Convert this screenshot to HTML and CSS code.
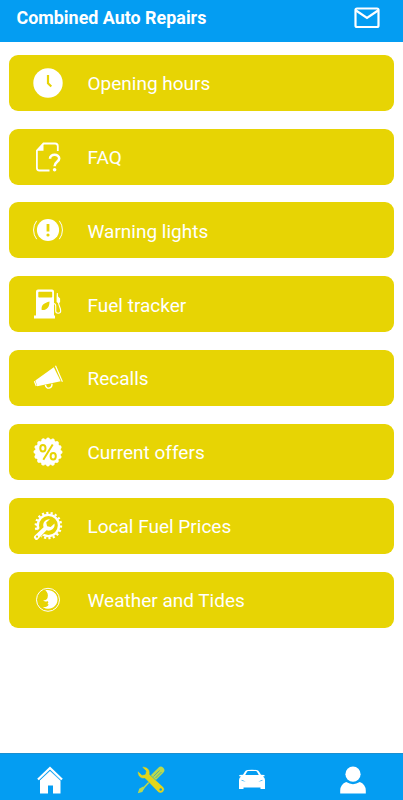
FILE: index.html
```
<!DOCTYPE html>
<html lang="en">
<head>
    <meta charset="UTF-8">
    <meta name="viewport" content="width=device-width, initial-scale=1.0">
    <title>Combined Auto Repairs</title>
    <link rel="stylesheet" href="styles.css">
</head>
<body>
    <header class="header">
        <h1>Combined Auto Repairs</h1>
        <svg class="mail" viewBox="0 0 26 22">
            <rect x="1.5" y="1.5" width="23" height="18.5" rx="1.5"/>
            <path d="M2 3.5l11 7.5 11-7.5"/>
        </svg>
    </header>

    <!-- Menu -->
    <main class="menu">
        <a class="item">
            <svg class="icon" viewBox="0 0 30 30">
                <circle class="fill" cx="15" cy="15" r="14.7"/>
                <path class="cut" d="M15 7v8.3l3.3 3.2" stroke-width="2.2"/>
            </svg>
            <span>Opening hours</span>
        </a>
        <a class="item">
            <svg class="icon" viewBox="0 0 30 30">
                <path class="line" d="M24.8 9V4.2q0-2.7-2.7-2.7H10.5L3.9 8.5V26q0 2.5 2.5 2.5H16.500" stroke-width="1.8"/>
                <path class="fill" d="M10.5 1v7.800H3.500z"/>
                <path class="line" d="M17 16.800c0-5.300 9.200-5.300 9.200-.3 0 3.400-4.600 3.300-4.600 7.700" stroke-width="2.6"/>
                <circle class="fill" cx="21.6" cy="27.8" r="1.8"/>
            </svg>
            <span>FAQ</span>
        </a>
        <a class="item">
            <svg class="icon" viewBox="0 0 30 30">
                <circle class="fill" cx="15" cy="15" r="11.1"/>
                <path class="line" d="M3.700 5.800a15 15 0 0 0 0 18.400M26.300 5.800a15 15 0 0 1 0 18.400" stroke-width="1"/>
                <path class="cut" d="M15 9v7.500" stroke-width="2.8"/>
                <circle class="dot" cx="15" cy="20" r="1.6"/>
            </svg>
            <span>Warning lights</span>
        </a>
        <a class="item">
            <svg class="icon" viewBox="0 0 30 30">
                <path class="fill" fill-rule="evenodd" d="M3 26.500V2.500q0-2 2-2h14q2 0 2 2v24h1v3H1v-3zM5.300 3.600v4.200q0 .8.800.8h12.300q.8 0 .8-.8V3.600q0-.8-.8-.8H6.100q-.8 0-.8.8zM16.500 12.500c-5 1.500-8.500 3-7.800 8.500 5 .5 7.800-2.500 7.800-8.500z"/>
                <path class="line" d="M20.500 14.500q2.200 0 2.200 2.500v5c0 3 5 3 5 0 0-3.500-2.200-5-2.200-9" stroke-width="1.1"/>
                <path class="fill" d="M23.800 4l1 0 .3 3.500 2 2v3.500l-1.500 1.500-2-1.500V8z"/>
            </svg>
            <span>Fuel tracker</span>
        </a>
        <a class="item">
            <svg class="icon" viewBox="0 0 30 30">
                <path class="fill" d="M2.300 17.500L20.800 4.200l6.900 14-23.400 5z"/>
                <path class="line" d="M22.500 2.800l6.900 15.900M1.400 18.300l1.900 4.600" stroke-width="1.2"/>
                <path class="line" d="M12.400 21.800c.6 4.900 6.800 4.300 6.600-1" stroke-width="1.4"/>
            </svg>
            <span>Recalls</span>
        </a>
        <a class="item">
            <svg class="icon" viewBox="0 0 30 30">
                <circle class="fill" cx="15" cy="15" r="13"/>
                <circle class="scallop" cx="15" cy="15" r="12.7" pathLength="64"/>
                <path class="cut" d="M19.700 7.500L10.300 22.700" stroke-width="2"/>
                <ellipse class="cut" cx="9.9" cy="11.2" rx="2.6" ry="3.2" stroke-width="2"/>
                <ellipse class="cut" cx="20.2" cy="19.2" rx="2.6" ry="3.2" stroke-width="2"/>
            </svg>
            <span>Current offers</span>
        </a>
        <a class="item">
            <svg class="icon" viewBox="0 0 30 30">
                <circle class="line" cx="15.4" cy="14.5" r="10.6" stroke-width="2.4"/>
                <circle class="line teeth" cx="15.4" cy="14.5" r="12.6" pathLength="72" stroke-width="2.4"/>
                <path class="gap" d="M11.900 17L2.900 26"/>
                <path class="fill" d="M16.900 8.200a6 6 0 0 0-6.300 8.100L1.300 25q-1 1.200.1 2.500l.8.900q1.200 1 2.500 0l8.800-9.200a6 6 0 0 0 8-6.700l-3.800 3.600-3.600-.8-.9-3.700z"/>
                <circle class="dot" cx="4" cy="25.7" r="1.1"/>
            </svg>
            <span>Local Fuel Prices</span>
        </a>
        <a class="item">
            <svg class="icon" viewBox="0 0 30 30">
                <circle class="line" cx="15" cy="14.8" r="11.5" stroke-width="1"/>
                <path class="fill" d="M12.300 5.300c6.200-1.200 12.200 3.200 12.200 9.300 0 7.300-8 12-14.700 7.300 2.200.5 5-.2 5.900-2.500l-1.500-.3c1.200-.6 1.400-1.700.6-3-1.200.9-3.400.6-4.700-.8 2.300.1 3.700-.6 4.400-2.400 1.100-3-.1-6-2.200-7.600z"/>
            </svg>
            <span>Weather and Tides</span>
        </a>
    </main>

    <!-- Bottom navigation -->
    <nav class="nav">
        <a>
            <svg viewBox="0 0 28 28">
                <path class="fill" d="M14 4.500L24.500 14v13.500H17v-8h-5v8H4V14z"/>
                <path class="line" d="M2 13.500L14 2l12 11.500" stroke-width="2.3"/>
                <path class="roof" d="M3.500 14.500L14 4.500l10.500 10"/>
            </svg>
        </a>
        <a class="active">
            <svg viewBox="0 0 28 28">
                <path class="driver" d="M3.500 25.500l4-4.500L23 4.500"/>
                <path class="handle" d="M17 11l6.800-6.800"/>
                <path class="groove" d="M16.500 10.500l6-6M18.500 12l6-6"/>
                <path class="tip" d="M.8 27.300l1.400-4.500 4-2.200 1.300 1.300-2.200 4z"/>
                <path class="wrench" d="M5 1.200L9 5 8.200 8.200 5 9 1 5C-.2 9.500 3.500 13.300 8 12.500l13 13.500c3 3.200 8.500-1.500 5.300-5L12.700 8.500C13.800 4 9.500-.5 5 1.200z"/>
                <circle class="hole" cx="23.7" cy="23.5" r="1.2"/>
            </svg>
        </a>
        <a>
            <svg viewBox="0 0 28 28">
                <path class="fill" fill-rule="evenodd" d="M5 8.800L7 5.500Q7.600 4 9.500 4q4.500-.6 9 0 1.900 0 2.500 1.500l2 3.300 3.500.2v1.300l-1.500.3q2 1.300 2 3.400V23h-4.500v-1.500h-17V23H1v-9q0-2.100 2-3.400L1.300 10.300V9zM7.200 9h13.600l-1.700-3q-.4-.8-1.400-.9-3.700-.4-7.400 0-1 .1-1.400.9zM3.200 13.700q.5 1.700 4.500 1.700zm21.600 0l-4.500 1.700q4 0 4.500-1.700z"/>
            </svg>
        </a>
        <a>
            <svg viewBox="0 0 28 28">
                <circle class="fill" cx="14" cy="8.2" r="7.6"/>
                <path class="fill" d="M1.200 27.500v-3q.3-6.500 6-8.500 6.800 4.300 13.600 0 5.700 2 6 8.500v3z"/>
            </svg>
        </a>
    </nav>
</body>
</html>
```

FILE: styles.css
```
* {
    box-sizing: border-box;
}
body {
    display: flex;
    flex-direction: column;
    height: 800px;
    margin: 0;
    background: #fff;
    color: #fff;
    font-family: Roboto, sans-serif;
}
svg {
    display: block;
    overflow: visible;
}
.header {
    display: flex;
    justify-content: space-between;
    height: 42px;
    padding: 6px 23px 0 16.5px;
    background: #049df2;
}
.header h1 {
    margin: 0;
    font-size: 17.9px;
    line-height: 23px;
    font-weight: bold;
    white-space: nowrap;
}
.mail {
    width: 26px;
    height: 22px;
    margin-top: 1px;
    fill: none;
    stroke: #fff;
    stroke-width: 2.2;
}
.menu {
    display: flex;
    flex: 1;
    flex-direction: column;
    gap: 17.85px;
    padding: 12.8px 9px 0;
}
.item {
    display: flex;
    align-items: center;
    gap: 24.5px;
    height: 56px;
    padding: 0 24px;
    border-radius: 9px;
    background: #e7d404;
    font-size: 19px;
    line-height: 24px;
}
.item span {
    padding-top: 2.4px;
}
.icon {
    width: 30px;
    height: 30px;
}
.fill {
    fill: #fff;
}
.line {
    fill: none;
    stroke: #fff;
}
.cut {
    fill: none;
    stroke: #e7d404;
}
.dot {
    fill: #e7d404;
}
.scallop {
    fill: none;
    stroke: #fff;
    stroke-width: 3.6;
    stroke-linecap: round;
    stroke-dasharray: 0.1 3.9;
}
.teeth {
    stroke-dasharray: 2 2;
}
.gap {
    stroke: #e7d404;
    stroke-width: 7;
}
.nav {
    display: grid;
    grid-template-columns: repeat(4, 1fr);
    justify-items: center;
    height: 47px;
    padding-top: 12px;
    border-top: 1px solid #1a8fd0;
    background: #049df2;
}
.nav svg {
    width: 28px;
    height: 28px;
}
.roof {
    fill: none;
    stroke: #049df2;
    stroke-width: 0.7;
}
.driver {
    stroke: #b9d94e;
    stroke-width: 1.6;
}
.handle {
    stroke: #b9d94e;
    stroke-width: 7;
    stroke-linecap: round;
}
.groove {
    fill: none;
    stroke: #3ba6b4;
    stroke-width: 0.8;
}
.tip {
    fill: #b9d94e;
}
.wrench {
    fill: #e2d51a;
    stroke: #049df2;
    stroke-width: 0.6;
}
.hole {
    fill: #049df2;
}
```
